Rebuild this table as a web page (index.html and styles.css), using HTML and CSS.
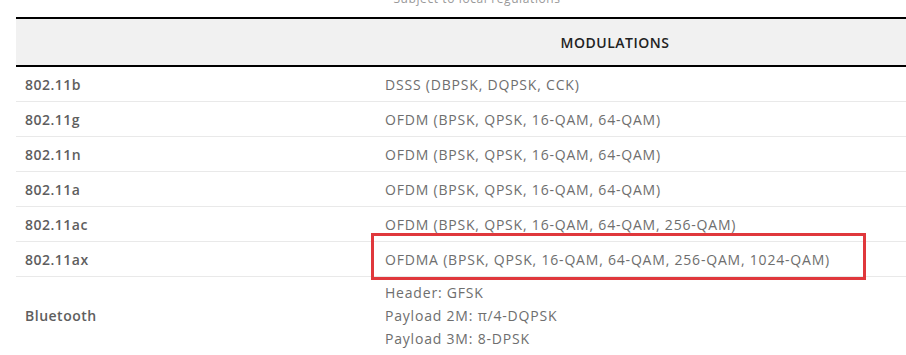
FILE: index.html
```html
<!DOCTYPE html>
<html>
<head>
<meta charset="utf-8">
<link rel="stylesheet" href="styles.css">
</head>
<body>
<div class="page">
  <div class="note">Subject to local regulations</div>
  <table class="spec">
    <thead>
      <tr><th class="c1"></th><th class="c2">MODULATIONS</th><th class="c3"></th></tr>
    </thead>
    <tbody>
      <tr><td class="c1">802.11b</td><td class="c2">DSSS (DBPSK, DQPSK, CCK)</td><td class="c3"></td></tr>
      <tr><td class="c1">802.11g</td><td class="c2">OFDM (BPSK, QPSK, 16-QAM, 64-QAM)</td><td class="c3"></td></tr>
      <tr><td class="c1">802.11n</td><td class="c2">OFDM (BPSK, QPSK, 16-QAM, 64-QAM)</td><td class="c3"></td></tr>
      <tr><td class="c1">802.11a</td><td class="c2">OFDM (BPSK, QPSK, 16-QAM, 64-QAM)</td><td class="c3"></td></tr>
      <tr><td class="c1">802.11ac</td><td class="c2">OFDM (BPSK, QPSK, 16-QAM, 64-QAM, 256-QAM)</td><td class="c3"></td></tr>
      <tr><td class="c1">802.11ax</td><td class="c2"><span class="hl">OFDMA (BPSK, QPSK, 16-QAM, 64-QAM, 256-QAM, 1024-QAM)</span></td><td class="c3"></td></tr>
      <tr class="multi"><td class="c1">Bluetooth</td><td class="c2">Header: GFSK<br>Payload 2M: π/4-DQPSK<br>Payload 3M: 8-DPSK</td><td class="c3"></td></tr>
    </tbody>
  </table>
</div>
</body>
</html>
```
FILE: styles.css
```css
html, body {
  margin: 0;
  padding: 0;
  background: #fff;
  overflow: hidden;
}
.page {
  padding-left: 16px;
  width: 920px;
  font-family: "Open Sans", "Noto Sans", sans-serif;
}
.note {
  margin-top: -9px;
  height: 26px;
  width: 890px;
  text-align: center;
  font-size: 12px;
  line-height: 16px;
  letter-spacing: 0.6px;
  color: #999;
  padding-left: 32px;
  box-sizing: border-box;
}
.spec {
  border-collapse: collapse;
  width: 904px;
  table-layout: fixed;
  font-size: 14px;
  color: #6e6e6e;
  letter-spacing: 0.8px;
}
.spec th {
  background: #f1f1f1;
  border-top: 2px solid #000;
  border-bottom: 2px solid #000;
  height: 46px;
  padding: 0;
  font-weight: 600;
  font-size: 14px;
  letter-spacing: 0.5px;
  color: #222;
  text-align: center;
}
.spec .c1 { width: 360px; }
.spec .c2 { width: 478px; }
.spec td {
  border-bottom: 1px solid #e9e9e9;
  padding: 6px 9px 5px;
  line-height: 23px;
  vertical-align: middle;
}
.spec td.c1 {
  font-weight: 600;
  color: #5e5e5e;
  letter-spacing: 0.5px;
}
.spec tr.multi td { padding-top: 4px; }
.hl {
  position: relative;
}
.hl::after {
  content: "";
  position: absolute;
  left: -14px;
  top: -17px;
  right: -36px;
  bottom: -11px;
  border: 3px solid #e0383c;
}
```
